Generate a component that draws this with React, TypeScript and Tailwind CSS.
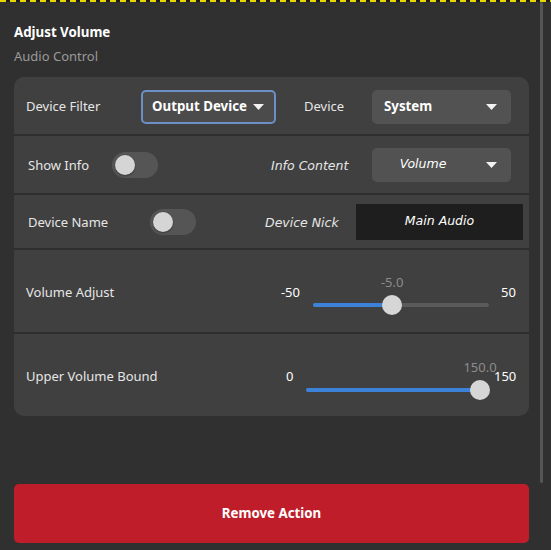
import type { ReactNode } from "react";

const SANS = "font-['Noto_Sans',sans-serif]";
const ITALIC = "font-['DejaVu_Sans',sans-serif] italic";

function Caret() {
  return (
    <svg width="11" height="6" viewBox="0 0 11 6" className="shrink-0">
      <path d="M0 0h11L5.5 6z" fill="#f2f2f2" />
    </svg>
  );
}

function Toggle() {
  return (
    <div className="flex h-[26px] w-[46px] items-center rounded-full bg-[#555555] px-[3px]">
      <div className="h-[20px] w-[20px] rounded-full bg-[#d5d5d5] shadow-[0_1px_2px_rgba(0,0,0,0.35)]" />
    </div>
  );
}

function Row({ children, className }: { children: ReactNode; className: string }) {
  return (
    <div className={`flex items-center border-b-2 border-[#2e2e2e] ${className}`}>
      {children}
    </div>
  );
}

function Slider({
  trackWidth,
  percent,
  value,
}: {
  trackWidth: number;
  percent: number;
  value: string;
}) {
  return (
    <div className="relative h-[20px]" style={{ width: trackWidth }}>
      <div className="absolute top-[8px] left-0 h-[4px] w-full rounded-full bg-[#5a5a5a]" />
      <div
        className="absolute top-[8px] left-0 h-[4px] rounded-full bg-[#3c82d8]"
        style={{ width: `${percent}%` }}
      />
      <div
        className="absolute top-0 h-[20px] w-[20px] -translate-x-1/2 rounded-full bg-[#d6d6d6]"
        style={{ left: `${percent}%` }}
      />
      <div
        className="absolute top-[-22px] -translate-x-1/2 text-[13px] leading-[18px] text-[#8c8c8c]"
        style={{ left: `${percent}%` }}
      >
        {value}
      </div>
    </div>
  );
}

export default function App() {
  return (
    <div className={`relative h-[550px] w-[551px] overflow-hidden bg-[#303030] ${SANS}`}>
      <div className="h-[2px] w-full bg-[repeating-linear-gradient(90deg,#e8d800_0_6px,#1e1e1e_6px_10px)]" />
      <div className="absolute top-[2px] left-[540px] h-[481px] w-[3px] rounded-full bg-[#555555]" />

      <div className="px-[14px]">
        <div className="pt-[20px] text-[13.3px] leading-[20px] font-bold text-white">
          Adjust Volume
        </div>
        <div className="mt-[5px] text-[13px] leading-[18px] text-[#9a9a9a]">
          Audio Control
        </div>

        <div className="mt-[12px] h-[339px] w-[515px] overflow-hidden rounded-[10px] bg-[#404040] text-[13px] text-[#e6e6e6]">
          <Row className="h-[59px] pt-[3px] pl-[12px]">
            <div className="w-[115px]">Device Filter</div>
            <div className="flex h-[34px] w-[135px] items-center justify-between rounded-[5px] border-2 border-[#6c8fc6] bg-[#4b4b4b] pr-[10px] pl-[9px] text-[13.3px] font-bold text-white">
              <span>Output Device</span>
              <Caret />
            </div>
            <div className="ml-[28px] w-[68px]">Device</div>
            <div className="flex h-[34px] w-[139px] items-center justify-between rounded-[5px] bg-[#525252] pr-[14px] pl-[12px] text-[13.3px] font-bold text-white">
              <span>System</span>
              <Caret />
            </div>
          </Row>

          <Row className="h-[59px] pl-[14px]">
            <div className="w-[84px] pt-[2px]">Show Info</div>
            <Toggle />
            <div className={`ml-[113px] w-[101px] pt-[3px] ${ITALIC} text-[12.5px] text-[#e6e6e6]`}>
              Info Content
            </div>
            <div className="flex h-[34px] w-[139px] items-center rounded-[5px] bg-[#525252] pr-[14px]">
              <span className={`flex-1 pr-[12px] pb-[1px] text-center ${ITALIC} text-[12.5px] text-white`}>
                Volume
              </span>
              <Caret />
            </div>
          </Row>

          <Row className="h-[55px] pl-[14px]">
            <div className="w-[122px] pt-[2px]">Device Name</div>
            <Toggle />
            <div className={`ml-[69px] w-[91px] pt-[3px] ${ITALIC} text-[12.5px] text-[#e6e6e6]`}>
              Device Nick
            </div>
            <div className={`flex h-[36px] w-[167px] items-center justify-center bg-[#1e1e1e] ${ITALIC} text-[12.5px] text-white`}>
              Main Audio
            </div>
          </Row>

          <Row className="h-[84px] pl-[12px]">
            <div className="w-[250px] pt-[4px]">Volume Adjust</div>
            <div className="w-[24px] pt-[4px] text-right text-white">-50</div>
            <div className="ml-[13px] pt-[28px]">
              <Slider trackWidth={176} percent={45} value="-5.0" />
            </div>
            <div className="ml-[12px] pt-[4px] text-white">50</div>
          </Row>

          <div className="flex h-[82px] items-center pl-[12px]">
            <div className="w-[260px] pt-[4px]">Upper Volume Bound</div>
            <div className="w-[20px] pt-[4px] text-white">0</div>
            <div className="pt-[30px]">
              <Slider trackWidth={174} percent={100} value="150.0" />
            </div>
            <div className="ml-[14px] pt-[4px] text-white">150</div>
          </div>
        </div>

        <button
          type="button"
          className="mt-[68px] flex h-[59px] w-[515px] items-center justify-center rounded-[5px] bg-[#bf1d29] text-[13.3px] font-bold text-white"
        >
          Remove Action
        </button>
      </div>
    </div>
  );
}
